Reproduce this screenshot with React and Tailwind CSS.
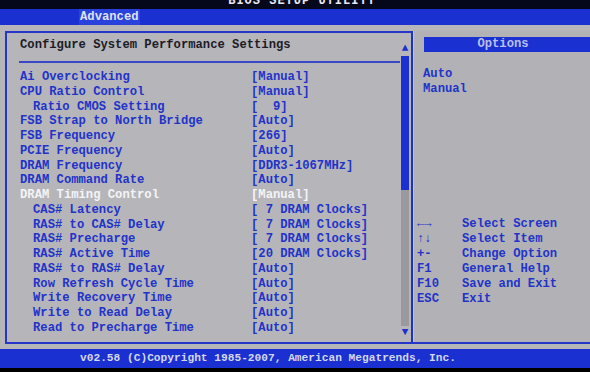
import React from 'react';

const rows = [
  { label: 'Ai Overclocking', value: '[Manual]' },
  { label: 'CPU Ratio Control', value: '[Manual]' },
  { label: 'Ratio CMOS Setting', value: '[  9]', sub: true },
  { label: 'FSB Strap to North Bridge', value: '[Auto]' },
  { label: 'FSB Frequency', value: '[266]' },
  { label: 'PCIE Frequency', value: '[Auto]' },
  { label: 'DRAM Frequency', value: '[DDR3-1067MHz]' },
  { label: 'DRAM Command Rate', value: '[Auto]' },
  { label: 'DRAM Timing Control', value: '[Manual]', active: true },
  { label: 'CAS# Latency', value: '[ 7 DRAM Clocks]', sub: true },
  { label: 'RAS# to CAS# Delay', value: '[ 7 DRAM Clocks]', sub: true },
  { label: 'RAS# Precharge', value: '[ 7 DRAM Clocks]', sub: true },
  { label: 'RAS# Active Time', value: '[20 DRAM Clocks]', sub: true },
  { label: 'RAS# to RAS# Delay', value: '[Auto]', sub: true },
  { label: 'Row Refresh Cycle Time', value: '[Auto]', sub: true },
  { label: 'Write Recovery Time', value: '[Auto]', sub: true },
  { label: 'Write to Read Delay', value: '[Auto]', sub: true },
  { label: 'Read to Precharge Time', value: '[Auto]', sub: true },
];

const help = [
  ['←→', 'Select Screen'],
  ['↑↓', 'Select Item'],
  ['+-', 'Change Option'],
  ['F1', 'General Help'],
  ['F10', 'Save and Exit'],
  ['ESC', 'Exit'],
];

export default function App() {
  return (
    <div
      className="w-[590px] h-[372px] bg-black flex flex-col overflow-hidden font-bold text-[12.2px] whitespace-pre"
      style={{ fontFamily: '"Liberation Mono", "DejaVu Sans Mono", monospace' }}
    >
      {/* title strip, cut off by the photo */}
      <div className="h-[9px] overflow-hidden flex justify-center bg-[#05071a]">
        <span className="-mt-[6px] ml-[14px] leading-[15px] text-[12px] text-[#e8e8f0] tracking-[1px]">BIOS SETUP UTILITY</span>
      </div>

      {/* menu bar */}
      <div className="h-[16px] bg-[#1a30d0] flex pl-[79px]">
        <span className="leading-[16px] text-[#dfe2f5] bg-[#2a42dc] px-[1px]">Advanced</span>
      </div>

      {/* main area */}
      <div className="flex-1 bg-[#b6b6ba] flex flex-col pl-[5px] pt-[6px]">
        <div className="flex h-[313px] border-b-2 border-[#2636c8]">
          {/* left panel */}
          <div className="w-[406px] border-l-2 border-t-2 border-[#2636c8] flex pl-[11px] pt-[5px]">
            <div className="w-[382px] flex flex-col">
              <div className="leading-[15px] text-[#1c1c28] pl-[2px]">Configure System Performance Settings</div>
              <div className="h-[2px] bg-[#3a48c8] mt-[8px] ml-[1px]" />
              <div className="flex flex-col mt-[7px] pl-[2px]">
                {rows.map((r) => (
                  <div
                    key={r.label}
                    className={`flex leading-[14.75px] ${r.active ? 'text-[#f4f4f6]' : 'text-[#2233c8]'}`}
                  >
                    <span className={`w-[231px] ${r.sub ? 'pl-[13px]' : ''}`}>{r.label}</span>
                    <span>{r.value}</span>
                  </div>
                ))}
              </div>
            </div>
            {/* scrollbar */}
            <div className="w-[8px] ml-[1px] flex flex-col items-center mt-[5px]">
              <span className="text-[11px] leading-[11px] text-[#1a30d0]">▲</span>
              <div className="w-[8px] h-[134px] bg-[#1a30d0] mt-[2px]" />
              <div className="w-[8px] h-[136px] bg-[#9a9a9e]" />
              <span className="text-[11px] leading-[11px] text-[#1a30d0] mt-[1px]">▼</span>
            </div>
          </div>

          {/* divider */}
          <div className="w-[2px] bg-[#1a30d0]" />
          <div className="w-[1px] bg-[#c8c8cc]" />

          {/* right panel */}
          <div className="flex-1 flex flex-col pt-[6px] bg-[#b2b2b6]">
            <div className="ml-[10px] h-[15px] bg-[#1a30d0] text-[#b9c0ee] leading-[15px] text-center pr-[8px]">Options</div>
            <div className="ml-[9px] mt-[15px] text-[#2233c8] leading-[15px] flex flex-col">
              <span>Auto</span>
              <span>Manual</span>
            </div>
            <div className="mt-[120px] ml-[3px] text-[#2233c8] leading-[15px] flex flex-col">
              {help.map(([k, d]) => (
                <div key={d} className="flex">
                  <span className="w-[45px]">{k}</span>
                  <span>{d}</span>
                </div>
              ))}
            </div>
          </div>
        </div>
      </div>

      {/* footer */}
      <div className="h-[19px] bg-[#1a30d0] flex justify-center">
        <span className="leading-[19px] text-[11.2px] text-[#d4d8ee] -ml-[54px]">v02.58 (C)Copyright 1985-2007, American Megatrends, Inc.</span>
      </div>
      <div className="h-[4px] bg-black" />
    </div>
  );
}
